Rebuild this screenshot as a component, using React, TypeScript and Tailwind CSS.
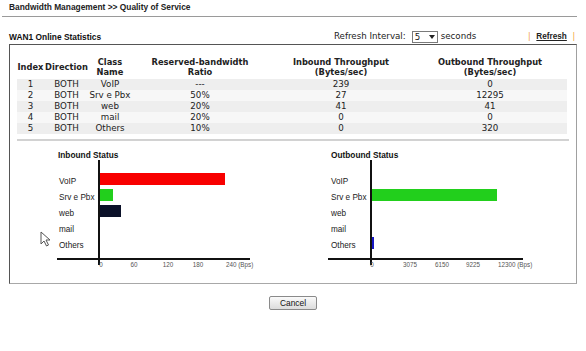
import React from "react";

type Bar = { label: string; value: number; color: string };
type Tick = { text: string; x: number; anchor?: "start" | "middle" };

const rows = [
  { index: 1, dir: "BOTH", name: "VoIP", ratio: "---", inb: "239", outb: "0" },
  { index: 2, dir: "BOTH", name: "Srv e Pbx", ratio: "50%", inb: "27", outb: "12295" },
  { index: 3, dir: "BOTH", name: "web", ratio: "20%", inb: "41", outb: "41" },
  { index: 4, dir: "BOTH", name: "mail", ratio: "20%", inb: "0", outb: "0" },
  { index: 5, dir: "BOTH", name: "Others", ratio: "10%", inb: "0", outb: "320" },
];

const inbound: Bar[] = [
  { label: "VoIP", value: 239, color: "#f80000" },
  { label: "Srv e Pbx", value: 27, color: "#22cf1c" },
  { label: "web", value: 41, color: "#0b1129" },
  { label: "mail", value: 0, color: "#000" },
  { label: "Others", value: 0, color: "#000" },
];

const outbound: Bar[] = [
  { label: "VoIP", value: 0, color: "#f80000" },
  { label: "Srv e Pbx", value: 12295, color: "#22cf1c" },
  { label: "web", value: 41, color: "#0b1129" },
  { label: "mail", value: 0, color: "#000" },
  { label: "Others", value: 320, color: "#1616c4" },
];

const StatusChart = ({
  title,
  bars,
  max,
  ticks,
  titleX,
  axisFrom,
  axisTo,
}: {
  title: string;
  bars: Bar[];
  max: number;
  ticks: Tick[];
  titleX: number;
  axisFrom: number;
  axisTo: number;
}) => {
  return (
    <svg width="230" height="130" viewBox="0 0 230 130" style={{ fontFamily: '"Liberation Sans", Arial, sans-serif' }}>
      <text x={titleX} y="13" fontSize="8.3" fontWeight="bold" fill="#111">
        {title}
      </text>
      {bars.map((b, i) => {
        const w = Math.round((b.value * 126) / max);
        return (
          <g key={b.label}>
            <text x="9" y={39 + i * 16} fontSize="8.2" fill="#222">
              {b.label}
            </text>
            {w > 0 && <rect x="49" y={28 + i * 16} width={w} height="12" fill={b.color} />}
          </g>
        );
      })}
      <line x1="49" y1="15" x2="49" y2="120" stroke="#111" strokeWidth="2" />
      <line x1={axisFrom} y1="114" x2={axisTo} y2="114" stroke="#111" strokeWidth="2" />
      {ticks.map((t) => (
        <text key={t.text} x={t.x} y="121.5" fontSize="6.3" fill="#555" textAnchor={t.anchor ?? "middle"}>
          {t.text}
        </text>
      ))}
    </svg>
  );
};

const Cursor = () => (
  <svg width="12" height="16" viewBox="0 0 12 16" className="absolute left-[40px] top-[231px]">
    <path d="M1 1 L1 13 L4 10 L6.5 15 L8.5 14 L6 9 L10 9 Z" fill="#fff" stroke="#555" strokeWidth="1" strokeLinejoin="round" />
  </svg>
);

export default function App() {
  return (
    <div className="relative w-[586px] h-[351px] bg-white text-[#111] font-['Liberation_Sans',Arial,sans-serif]">
      <div className="h-[16px] pl-[9px] pt-[1px] text-[8.4px] font-bold leading-[12px] text-[#222]">
        Bandwidth Management &gt;&gt; Quality of Service
      </div>
      <div className="ml-[2px] h-px w-[575px] bg-[#9a9a9a]" />

      <div className="mt-[14px] mb-px flex h-[12px] items-center pl-[9px] pr-[11px]">
        <div className="flex-1 text-[8.4px] font-bold leading-[12px]">WAN1 Online Statistics</div>
        <div className="flex items-center font-['DejaVu_Sans',sans-serif] text-[8.7px] text-[#222]">
          <span>Refresh Interval:</span>
          <span className="ml-[6px] flex h-[12px] w-[26px] items-center justify-between border border-[#7a7a7a] bg-white pl-[2px] pr-[2px] leading-none">
            <span>5</span>
            <svg width="6" height="4" viewBox="0 0 6 4">
              <path d="M0 0 L6 0 L3 4 Z" fill="#222" />
            </svg>
          </span>
          <span className="ml-[3px]">seconds</span>
        </div>
        <div className="ml-[52px] flex items-center gap-[6px] text-[8.2px]">
          <span className="text-[#f29a38]">|</span>
          <span className="font-bold text-[#222] underline">Refresh</span>
          <span className="text-[#f29a38]">|</span>
        </div>
      </div>

      <div className="mx-[9px] h-[240px] border border-t-[#555] border-l-[#555] border-r-[#a0a0a0] border-b-[#a8a8a8]">
        <div className="mx-[7px] pt-[12px]">
          <table className="w-[550px] table-fixed border-collapse font-['DejaVu_Sans',sans-serif] text-[8.7px] text-[#222]">
            <colgroup>
              <col className="w-[27px]" />
              <col className="w-[45px]" />
              <col className="w-[42px]" />
              <col className="w-[138px]" />
              <col className="w-[144px]" />
              <col className="w-[154px]" />
            </colgroup>
            <thead>
              <tr className="h-[22px] text-[8.3px] font-bold leading-[10px]">
                <th className="pb-[2px] align-middle">Index</th>
                <th className="pb-[2px] align-middle">Direction</th>
                <th className="pb-[2px] align-middle">
                  Class
                  <br />
                  Name
                </th>
                <th className="pb-[2px] align-middle">
                  Reserved-bandwidth
                  <br />
                  Ratio
                </th>
                <th className="pb-[2px] align-middle">
                  Inbound Throughput
                  <br />
                  (Bytes/sec)
                </th>
                <th className="pb-[2px] align-middle">
                  Outbound Throughput
                  <br />
                  (Bytes/sec)
                </th>
              </tr>
            </thead>
            <tbody>
              {rows.map((r, i) => (
                <tr key={r.index} className={`h-[11px] leading-[11px] ${i % 2 === 0 ? "bg-[#eeeeee]" : "bg-[#f7f7f7]"}`}>
                  <td className="p-0 text-center">{r.index}</td>
                  <td className="p-0 text-center">{r.dir}</td>
                  <td className="p-0 text-center whitespace-nowrap">{r.name}</td>
                  <td className="p-0 text-center">{r.ratio}</td>
                  <td className="p-0 text-center">{r.inb}</td>
                  <td className="p-0 text-center">{r.outb}</td>
                </tr>
              ))}
            </tbody>
          </table>
          <div className="mt-[5px] h-[2px] w-[552px] bg-[#d2d2d2]" />
        </div>

        <div className="mt-[4px] flex pl-[40px]">
          <StatusChart
            title="Inbound Status"
            bars={inbound}
            max={239}
            titleX={8}
            axisFrom={7}
            axisTo={200}
            ticks={[
              { text: "0", x: 51 },
              { text: "60", x: 84 },
              { text: "120", x: 118 },
              { text: "180", x: 148 },
              { text: "240 (Bps)", x: 176, anchor: "start" },
            ]}
          />
          <div className="ml-[42px]">
            <StatusChart
              title="Outbound Status"
              bars={outbound}
              max={12295}
              titleX={9}
              axisFrom={6}
              axisTo={201}
              ticks={[
                { text: "0", x: 50 },
                { text: "3075", x: 88 },
                { text: "6150", x: 120 },
                { text: "9225", x: 151 },
                { text: "12300 (Bps)", x: 176, anchor: "start" },
              ]}
            />
          </div>
        </div>
      </div>

      <div className="mt-[12px] flex justify-center">
        <button className="h-[14px] w-[48px] rounded-[2px] border border-[#8a8a8a] bg-gradient-to-b from-[#fafafa] to-[#dcdcdc] text-[8.4px] leading-[12px] text-[#111]">
          Cancel
        </button>
      </div>

      <Cursor />
    </div>
  );
}
